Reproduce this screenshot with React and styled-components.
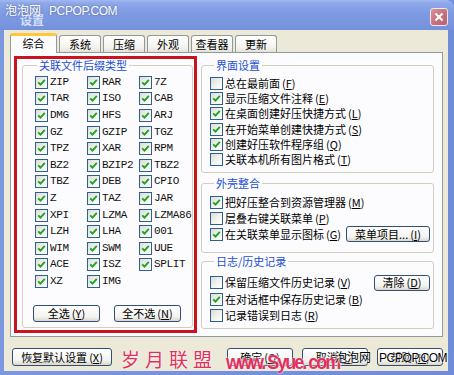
import React from 'react';
import styled, { createGlobalStyle } from 'styled-components';

const cjk = `"Noto Sans CJK SC", "Liberation Sans", sans-serif`;

const GlobalStyle = createGlobalStyle`
  html, body {
    margin: 0;
    padding: 0;
  }
  body {
    width: 454px;
    height: 375px;
    overflow: hidden;
    font-family: ${cjk};
    font-size: 11px;
  }
`;

const Window = styled.div`
  position: relative;
  width: 454px;
  height: 375px;
  display: flex;
  flex-direction: column;
  background: #7290dc;
  overflow: hidden;
`;

const TitleBar = styled.div`
  height: 30px;
  flex: none;
  box-sizing: border-box;
  display: flex;
  align-items: flex-start;
  justify-content: space-between;
  padding: 8px 6px 0 20px;
  border-radius: 0 8px 0 0;
  background: linear-gradient(
    to bottom,
    #a3b8f0 0%,
    #8ea8ea 10%,
    #7e9ae2 45%,
    #7a96df 75%,
    #7390db 100%
  );
`;

const Title = styled.span`
  font: bold 12px/14px ${cjk};
  color: #d6e0f7;
  margin-top: 5px;
`;

const CloseButton = styled.span`
  width: 18px;
  height: 18px;
  box-sizing: border-box;
  border: 1px solid #f4e6ea;
  border-radius: 3px;
  background: linear-gradient(135deg, #d9929c, #c7707e 55%, #b9616f);
  display: flex;
  align-items: center;
  justify-content: center;
`;

const Frame = styled.div`
  flex: 1;
  display: flex;
  padding: 0 6px 4px 4px;
  background: linear-gradient(to right, #7b97e0, #6f8cd9);
`;

const Body = styled.div`
  flex: 1;
  display: flex;
  flex-direction: column;
  padding: 3px 5px 0 6px;
  background: #ece9d8;
`;

const TabStrip = styled.div`
  height: 19px;
  flex: none;
  display: flex;
  align-items: flex-end;
`;

const Tab = styled.div`
  box-sizing: border-box;
  min-width: ${p => (p.$active ? 47 : 42)}px;
  height: ${p => (p.$active ? 20 : 17)}px;
  margin-left: ${p => (p.$first ? 0 : 2)}px;
  margin-bottom: ${p => (p.$active ? -1 : 0)}px;
  padding: 0 3px;
  position: relative;
  z-index: ${p => (p.$active ? 1 : 0)};
  border: 1px solid #919b9c;
  border-bottom: none;
  border-top: ${p => (p.$active ? '3px solid #ffc83c' : '1px solid #919b9c')};
  border-radius: 3px 3px 0 0;
  background: ${p =>
    p.$active
      ? '#fcfcfe'
      : 'linear-gradient(to bottom, #ffffff, #f4f3ee 70%, #e4e2d8)'};
  text-align: center;
  font: 11px/${p => (p.$active ? 15 : 16)}px ${cjk};
  color: #000;
`;

const Panel = styled.div`
  height: 285px;
  flex: none;
  box-sizing: border-box;
  display: flex;
  align-items: flex-start;
  gap: 4px;
  padding: 3px 8px 3px 3px;
  border: 1px solid #919b9c;
  background: #fcfcfe;
`;

const Highlight = styled.div`
  width: 183px;
  box-sizing: border-box;
  padding: 0 1px 2px 5px;
  border: 3px solid #c8141e;
`;

const Group = styled.fieldset`
  margin: ${p => p.$top || 0}px 0 0;
  height: ${p => (p.$h ? `${p.$h}px` : 'auto')};
  box-sizing: border-box;
  min-width: 0;
  padding: ${p => p.$pad};
  border: 1px solid #d0d0bf;
  border-radius: 3px;
`;

const Legend = styled.legend`
  margin-left: 4px;
  padding: 0 2px;
  font: 11px/12px ${cjk};
  color: #1c4fd0;
`;

const TypeGrid = styled.div`
  display: grid;
  grid-template-columns: 52px 52px 1fr;
  grid-auto-rows: 16.6px;
  padding-left: 2px;
`;

const Option = styled.label`
  display: flex;
  align-items: center;
  gap: 2px;
  height: ${p => p.$h || 16}px;
  white-space: nowrap;
  font: 11px/13px ${cjk};
  color: #000;
`;

const TypeName = styled.span`
  font: 11px/13px "Liberation Mono", monospace;
  letter-spacing: -0.35px;
  color: #111;
`;

const Box = styled.span`
  width: 13px;
  height: 13px;
  flex: none;
  box-sizing: border-box;
  border: 1px solid #2d5f8f;
  background: linear-gradient(135deg, #dcdcd7 0%, #f2f2ee 55%, #ffffff 100%);
  display: inline-flex;
  align-items: center;
  justify-content: center;
`;

const Row = styled.div`
  display: flex;
  align-items: center;
  justify-content: space-between;
  height: ${p => p.$h}px;
  padding-right: 3px;
`;

const Button = styled.button`
  width: ${p => p.$w}px;
  height: ${p => p.$h || 17}px;
  flex: none;
  box-sizing: border-box;
  margin: 0;
  padding: 0;
  border: 1px solid #2f4f77;
  border-radius: 3px;
  background: linear-gradient(to bottom, #ffffff 0%, #f3f3ef 70%, #dcd8cc 100%);
  font: 11px/13px ${cjk};
  color: #000;
  display: flex;
  align-items: center;
  justify-content: center;
`;

const GroupButtons = styled.div`
  display: flex;
  gap: 14px;
  margin: 15px 0 0 0;
`;

const RightColumn = styled.div`
  width: 233px;
  flex: none;
  display: flex;
  flex-direction: column;
  margin-top: 3px;
`;

const ButtonBar = styled.div`
  display: flex;
  align-items: center;
  gap: 9px;
  margin-top: 11px;
  padding-left: 2px;
`;

const Spacer = styled.div`
  flex: 1;
`;

const Key = styled.span`
  margin-left: 2px;
  u {
    text-decoration: underline;
  }
`;

const Mark = styled.div`
  position: absolute;
  left: ${p => p.$x}px;
  top: ${p => p.$y}px;
  display: flex;
  align-items: baseline;
  gap: 8px;
  white-space: nowrap;
  color: ${p => p.$color};
  text-shadow: ${p => p.$halo};
  pointer-events: none;
  z-index: 5;
`;

const MarkCjk = styled.span`
  font: 12px/14px ${cjk};
`;

const MarkLatin = styled.span`
  font: 12px/14px "Liberation Sans", sans-serif;
  letter-spacing: -0.4px;
`;

const Stamp = styled.div`
  position: absolute;
  left: ${p => p.$x}px;
  top: ${p => p.$y}px;
  white-space: nowrap;
  color: #e0305f;
  text-shadow: 0 0 1px #fff, 0 0 2px #fff;
  pointer-events: none;
  z-index: 4;
`;

const StampCjk = styled.span`
  font: 19px/22px ${cjk};
  letter-spacing: 5px;
`;

const StampUrl = styled.span`
  display: inline-block;
  font: bold 18px/20px "Liberation Sans", sans-serif;
  letter-spacing: -2px;
  transform: scaleY(1.12);
  transform-origin: top left;
`;

const Check = ({ on }) => (
  <Box>
    {on && (
      <svg width="9" height="9" viewBox="0 0 9 9">
        <path
          d="M1.2 4.3 L3.5 6.7 L7.8 1.9"
          fill="none"
          stroke="#24a224"
          strokeWidth="1.9"
        />
      </svg>
    )}
  </Box>
);

const Label = ({ text, k }) => (
  <span>
    {text}
    <Key>
      (<u>{k}</u>)
    </Key>
  </span>
);

const types = [
  'ZIP', 'RAR', '7Z', 'TAR', 'ISO', 'CAB', 'DMG', 'HFS', 'ARJ',
  'GZ', 'GZIP', 'TGZ', 'TPZ', 'XAR', 'RPM', 'BZ2', 'BZIP2', 'TBZ2',
  'TBZ', 'DEB', 'CPIO', 'Z', 'TAZ', 'JAR', 'XPI', 'LZMA', 'LZMA86',
  'LZH', 'LHA', '001', 'WIM', 'SWM', 'UUE', 'ACE', 'ISZ', 'SPLIT',
  'XZ', 'IMG',
];

const tabs = ['综合', '系统', '压缩', '外观', '查看器', '更新'];

const uiOptions = [
  ['总在最前面', 'F', false],
  ['显示压缩文件注释', 'E', true],
  ['在桌面创建好压快捷方式', 'L', true],
  ['在开始菜单创建快捷方式', 'S', true],
  ['创建好压软件程序组', 'Q', true],
  ['关联本机所有图片格式', 'T', false],
];

export default function App() {
  return (
    <>
      <GlobalStyle />
      <Window>
        <TitleBar>
          <Title>设置</Title>
          <CloseButton>
            <svg width="10" height="10" viewBox="0 0 10 10">
              <path d="M1.5 1.5 L8.5 8.5 M8.5 1.5 L1.5 8.5" stroke="#fff" strokeWidth="2" />
            </svg>
          </CloseButton>
        </TitleBar>

        <Frame>
          <Body>
            <TabStrip>
              {tabs.map((t, i) => (
                <Tab key={t} $active={i === 0} $first={i === 0}>
                  {t}
                </Tab>
              ))}
            </TabStrip>

            <Panel>
              <Highlight>
                <Group $pad="3px 4px 5px 10px">
                  <Legend>关联文件后缀类型</Legend>
                  <TypeGrid>
                    {types.map(t => (
                      <Option key={t} $h={16.6}>
                        <Check on />
                        <TypeName>{t}</TypeName>
                      </Option>
                    ))}
                  </TypeGrid>
                  <GroupButtons>
                    <Button $w={67}>
                      <Label text="全选" k="Y" />
                    </Button>
                    <Button $w={67}>
                      <Label text="全不选" k="N" />
                    </Button>
                  </GroupButtons>
                </Group>
              </Highlight>

              <RightColumn>
                <Group $h={114} $pad="5px 0 0 8px">
                  <Legend>界面设置</Legend>
                  {uiOptions.map(([text, k, on]) => (
                    <Option key={k} $h={15.2}>
                      <Check on={on} />
                      <Label text={text} k={k} />
                    </Option>
                  ))}
                </Group>

                <Group $h={76} $top={4} $pad="5px 0 0 8px">
                  <Legend>外壳整合</Legend>
                  <Option $h={16}>
                    <Check on />
                    <Label text="把好压整合到资源管理器" k="M" />
                  </Option>
                  <Option $h={16}>
                    <Check />
                    <Label text="层叠右键关联菜单" k="P" />
                  </Option>
                  <Row $h={16}>
                    <Option $h={16}>
                      <Check on />
                      <Label text="在关联菜单显示图标" k="G" />
                    </Option>
                    <Button $w={84} $h={16}>
                      <Label text="菜单项目..." k="I" />
                    </Button>
                  </Row>
                </Group>

                <Group $h={74} $top={2} $pad="7.5px 0 0 8px">
                  <Legend>日志/历史记录</Legend>
                  <Row $h={16.4}>
                    <Option $h={16.4}>
                      <Check />
                      <Label text="保留压缩文件历史记录" k="V" />
                    </Option>
                    <Button $w={56} $h={16}>
                      <Label text="清除" k="D" />
                    </Button>
                  </Row>
                  <Option $h={16.4}>
                    <Check on />
                    <Label text="在对话框中保存历史记录" k="B" />
                  </Option>
                  <Option $h={16.4}>
                    <Check />
                    <Label text="记录错误到日志" k="R" />
                  </Option>
                </Group>
              </RightColumn>
            </Panel>

            <ButtonBar>
              <Button $w={100} $h={18}>
                <Label text="恢复默认设置" k="X" />
              </Button>
              <Spacer />
              <Button $w={66} $h={18}>
                <Label text="确定" k="O" />
              </Button>
              <Button $w={66} $h={18}>
                <Label text="取消" k="C" />
              </Button>
              <Button $w={66} $h={18}>
                <Label text="帮助" k="H" />
              </Button>
            </ButtonBar>
          </Body>
        </Frame>

        <Mark $x={5} $y={3} $color="#ffffff" $halo="0 0 2px rgba(40,50,90,0.6)">
          <MarkCjk>泡泡网</MarkCjk>
          <MarkLatin>PCPOP.COM</MarkLatin>
        </Mark>
        <Stamp $x={121} $y={348}>
          <StampCjk>岁月联盟</StampCjk>
        </Stamp>
        <Stamp $x={226} $y={351}>
          <StampUrl>www. Syue. com</StampUrl>
        </Stamp>
        <Mark
          $x={335}
          $y={350}
          $color="#000000"
          $halo="0 0 1px #fff, 0 0 2px #fff, 0 0 2px #fff"
        >
          <MarkCjk>泡泡网</MarkCjk>
          <MarkLatin>PCPOP.COM</MarkLatin>
        </Mark>
      </Window>
    </>
  );
}
